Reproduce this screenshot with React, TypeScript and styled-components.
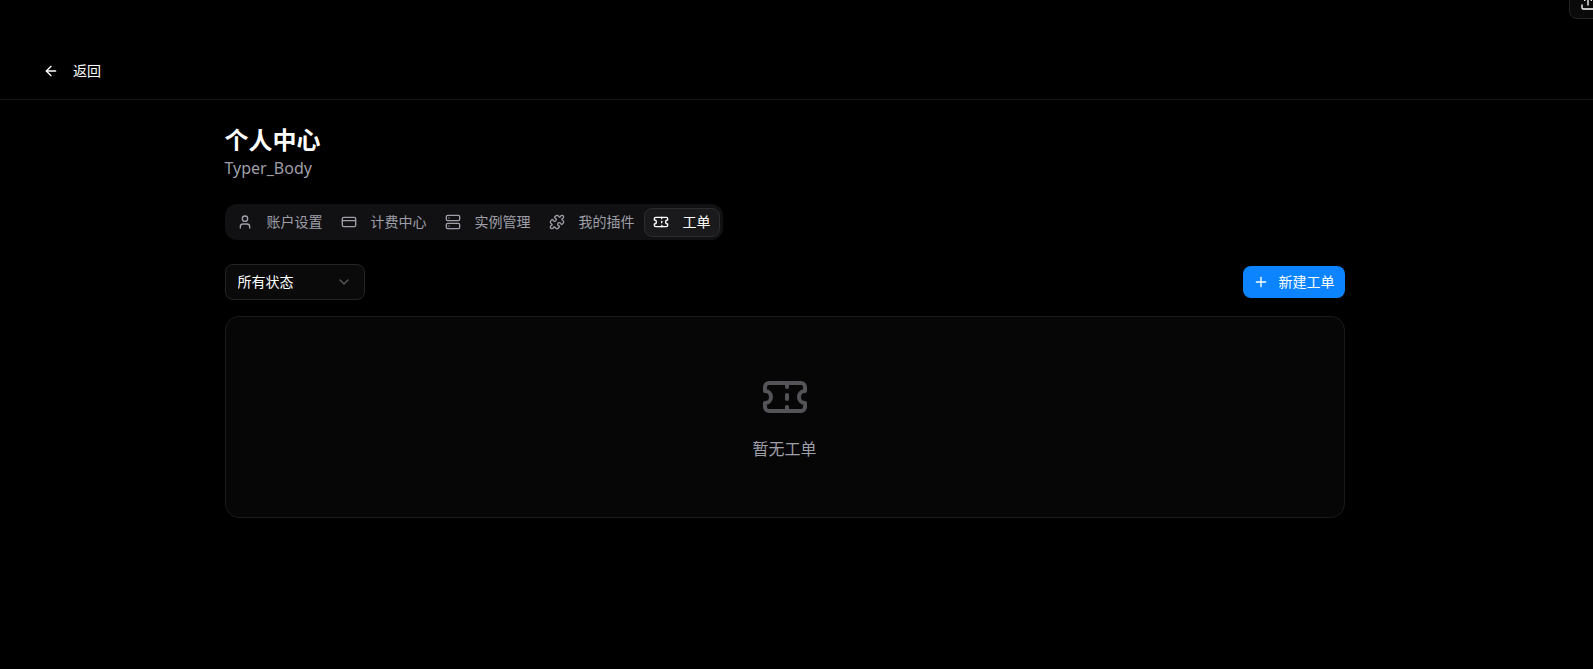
import React from "react";
import styled, { createGlobalStyle } from "styled-components";
import {
  ArrowLeft,
  ChevronDown,
  CreditCard,
  Plus,
  Puzzle,
  Server,
  Ticket,
  Upload,
  User,
} from "lucide-react";

const colors = {
  page: "#000000",
  surface: "#060606",
  control: "#0a0a0a",
  muted: "#111113",
  active: "#1a1a1c",
  line: "#1a1a1a",
  lineStrong: "#242426",
  lineActive: "#2c2c2f",
  text: "#ffffff",
  textMuted: "#9f9fa9",
  accent: "#0d84ff",
};

const GlobalStyle = createGlobalStyle`
  *, *::before, *::after { box-sizing: border-box; }
  body {
    margin: 0;
    background: ${colors.page};
    color: ${colors.text};
    font-family: "Noto Sans", "Noto Sans CJK SC", sans-serif;
    font-size: 14px;
    line-height: 20px;
  }
  button, select { font: inherit; color: inherit; }
  h1, p { margin: 0; }
`;

const Page = styled.div`
  position: relative;
  min-height: 100vh;
  overflow: hidden;
`;

const Header = styled.header`
  display: flex;
  padding: 55px 32px 12px;
  border-bottom: 1px solid #161616;
`;

const BackButton = styled.button`
  display: flex;
  align-items: center;
  gap: 14px;
  height: 32px;
  padding: 0 11px;
  border: 0;
  border-radius: 8px;
  background: transparent;
`;

const FloatingButton = styled.button`
  position: absolute;
  top: -13px;
  right: -14px;
  display: grid;
  place-items: center;
  width: 38px;
  height: 32px;
  padding: 0;
  border: 1px solid ${colors.lineStrong};
  border-radius: 8px;
  background: ${colors.control};
`;

const Gutter = styled.div`
  padding: 24px 40px 24px 16px;
`;

const Main = styled.main`
  display: flex;
  flex-direction: column;
  gap: 24px;
  max-width: 1120px;
  margin: 0 auto;
`;

const Title = styled.h1`
  font-size: 24px;
  line-height: 32px;
  font-weight: 700;
`;

const Subtitle = styled.p`
  font-size: 16px;
  line-height: 24px;
  color: ${colors.textMuted};
`;

const TabList = styled.nav`
  display: flex;
  align-self: flex-start;
  height: 36px;
  padding: 4px 3px 3px;
  border-radius: 12px;
  background: ${colors.muted};
`;

const Tab = styled.button<{ $active: boolean }>`
  display: flex;
  align-items: center;
  gap: 14px;
  padding: 0 8px 1px;
  border: 1px solid ${(p) => (p.$active ? colors.lineActive : "transparent")};
  border-radius: 8px;
  background: ${(p) => (p.$active ? colors.active : "transparent")};
  color: ${(p) => (p.$active ? colors.text : colors.textMuted)};
  white-space: nowrap;
`;

const Tickets = styled.section`
  display: flex;
  flex-direction: column;
  gap: 16px;
`;

const Toolbar = styled.div`
  display: flex;
  align-items: center;
  justify-content: space-between;
`;

const SelectBox = styled.div`
  display: grid;
  align-items: center;
  width: 140px;

  > * { grid-area: 1 / 1; }
  > svg {
    justify-self: end;
    margin-right: 13px;
    color: #56565b;
    pointer-events: none;
  }
`;

const StatusSelect = styled.select`
  appearance: none;
  width: 100%;
  height: 36px;
  padding: 0 36px 0 12px;
  border: 1px solid ${colors.lineStrong};
  border-radius: 8px;
  background: ${colors.control};
`;

const CreateButton = styled.button`
  display: flex;
  align-items: center;
  gap: 10px;
  height: 32px;
  padding: 0 10px;
  border: 0;
  border-radius: 8px;
  background: ${colors.accent};
`;

const EmptyCard = styled.div`
  display: flex;
  flex-direction: column;
  align-items: center;
  gap: 16px;
  padding: 56px 24px;
  border: 1px solid ${colors.line};
  border-radius: 14px;
  background: ${colors.surface};
  color: ${colors.textMuted};
  font-size: 16px;
  line-height: 24px;

  > svg { opacity: 0.5; }
`;

const tabs = [
  { label: "账户设置", Icon: User },
  { label: "计费中心", Icon: CreditCard },
  { label: "实例管理", Icon: Server },
  { label: "我的插件", Icon: Puzzle },
  { label: "工单", Icon: Ticket },
];

export default function App() {
  return (
    <Page>
      <GlobalStyle />
      <Header>
        <BackButton type="button">
          <ArrowLeft size={16} />
          返回
        </BackButton>
      </Header>
      <FloatingButton type="button" aria-label="上传">
        <Upload size={16} />
      </FloatingButton>
      <Gutter>
        <Main>
          <div>
            <Title>个人中心</Title>
            <Subtitle>Typer_Body</Subtitle>
          </div>
          <TabList>
            {tabs.map(({ label, Icon }) => (
              <Tab key={label} type="button" $active={label === "工单"}>
                <Icon size={16} />
                {label}
              </Tab>
            ))}
          </TabList>
          <Tickets>
            <Toolbar>
              <SelectBox>
                <StatusSelect aria-label="工单状态">
                  <option>所有状态</option>
                </StatusSelect>
                <ChevronDown size={16} />
              </SelectBox>
              <CreateButton type="button">
                <Plus size={16} />
                新建工单
              </CreateButton>
            </Toolbar>
            <EmptyCard>
              <Ticket size={48} />
              <p>暂无工单</p>
            </EmptyCard>
          </Tickets>
        </Main>
      </Gutter>
    </Page>
  );
}
